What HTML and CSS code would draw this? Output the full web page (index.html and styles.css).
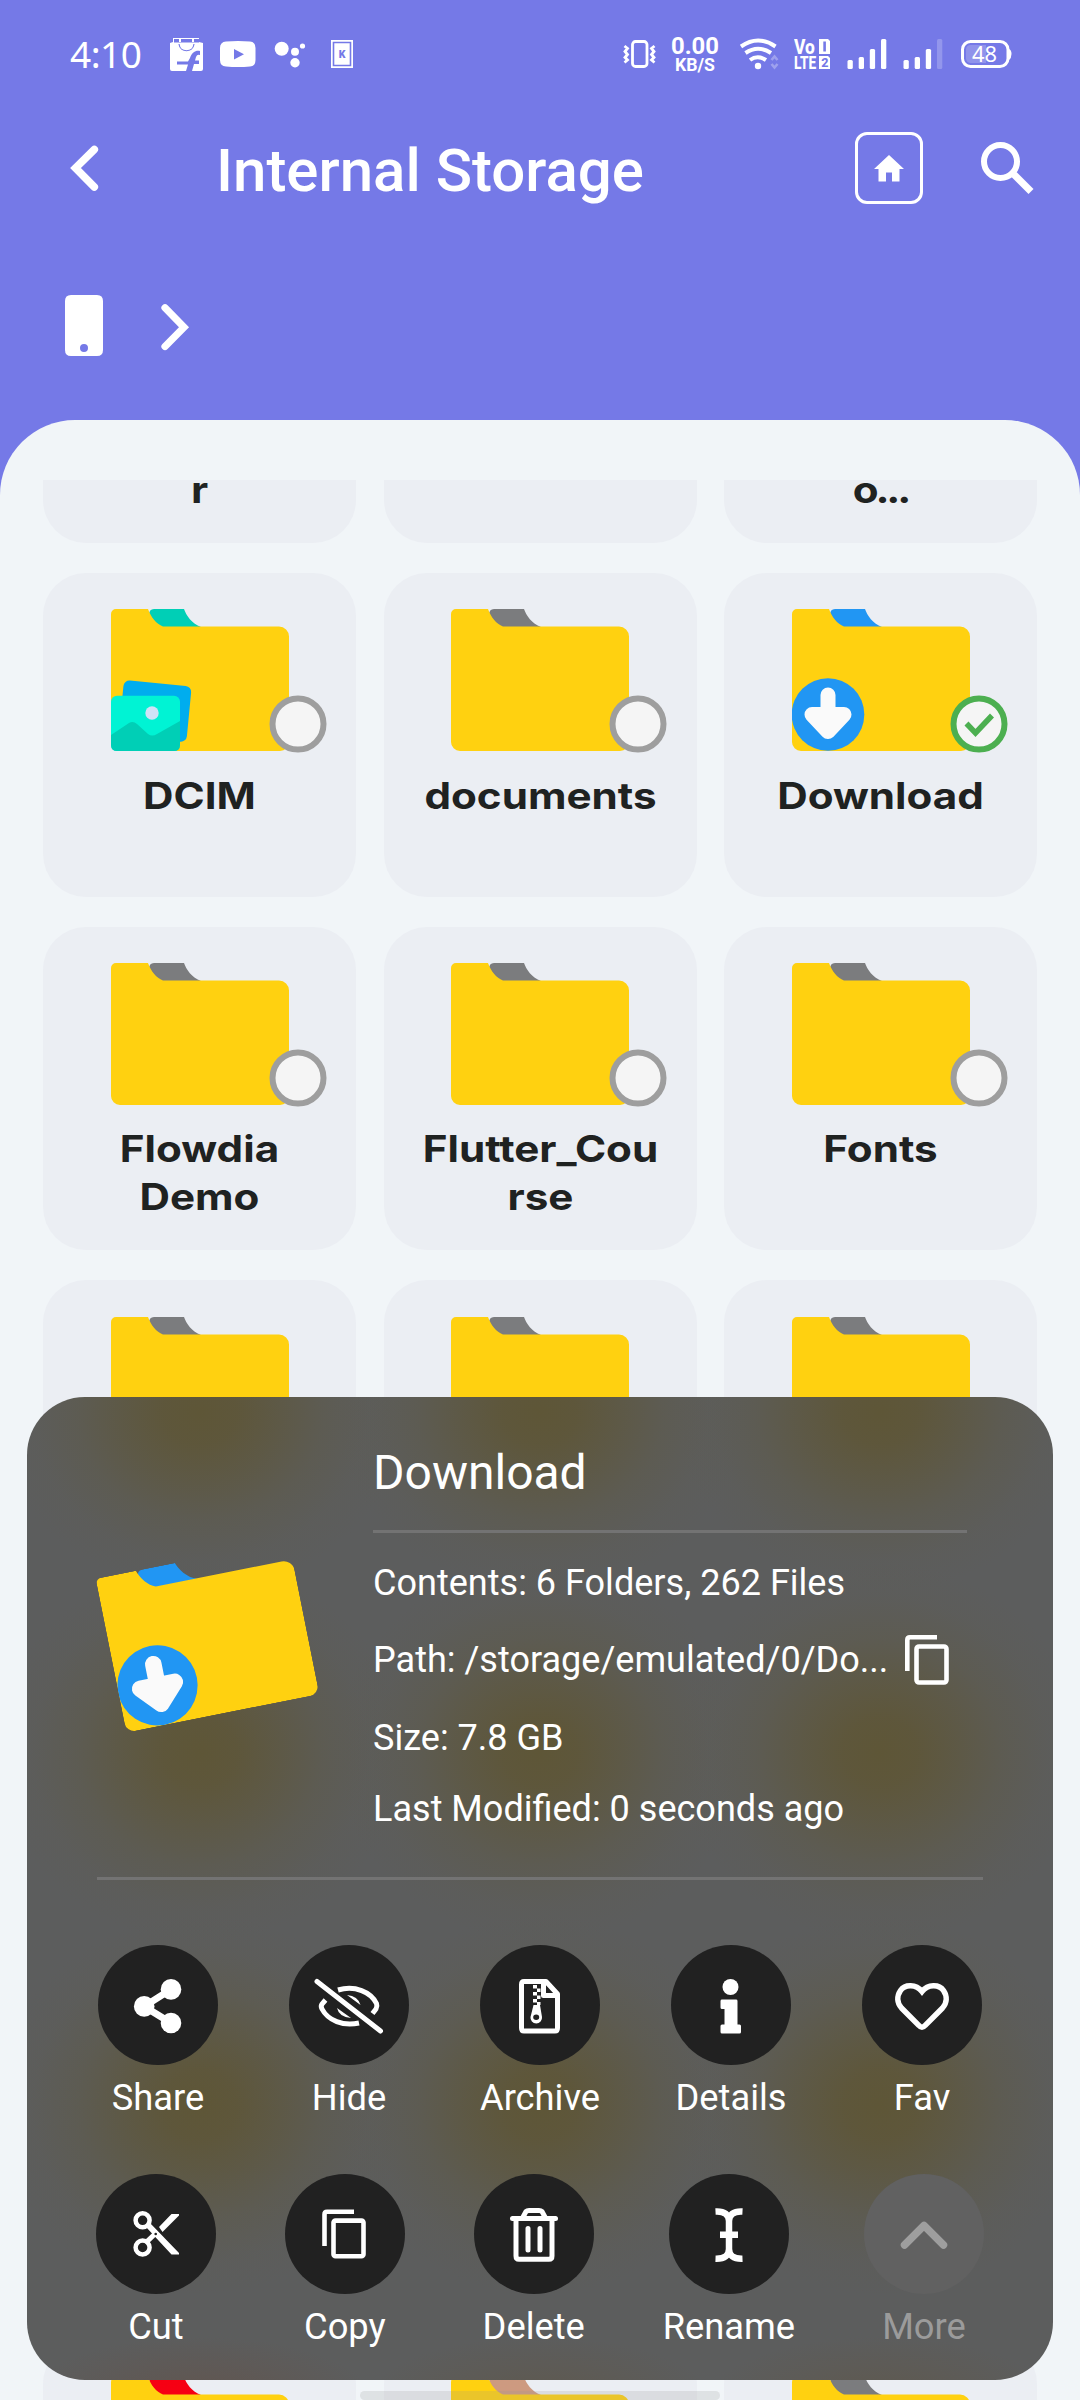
FILE: index.html
```html
<!DOCTYPE html>
<html lang="en">
<head>
<meta charset="utf-8">
<title>Internal Storage</title>
<link rel="stylesheet" href="styles.css">
</head>
<body>
<svg class="defs" width="0" height="0">
  <symbol id="folder" viewBox="0 0 178 142">
    <path d="M43 0H73C75 6 81 15 90 18H48L38 6Q38 0 43 0Z" fill="currentColor"/>
    <path d="M5 0H37C40 8 45 15 52 17.500H168A10 10 0 0 1 178 27.500V133A9 9 0 0 1 169 142H9A9 9 0 0 1 0 133V5A5 5 0 0 1 5 0Z" fill="#ffd110"/>
  </symbol>
  <symbol id="arrow-badge" viewBox="0 0 178 142">
    <circle cx="36" cy="105.500" r="36.300" fill="#2196f3"/>
    <path d="M36 86V118M20 105.500L36 122.500L52 105.500Z" fill="#fafafa" stroke="#fafafa" stroke-width="15" stroke-linecap="round" stroke-linejoin="round"/>
  </symbol>
  <symbol id="radio" viewBox="0 0 58 58">
    <circle cx="29" cy="29" r="25.500" fill="#f5f5f5" stroke="#9e9e9e" stroke-width="6"/>
  </symbol>
  <symbol id="radio-on" viewBox="0 0 58 58">
    <circle cx="29" cy="29" r="25.500" fill="#f5f5f5" stroke="#4caf50" stroke-width="6"/>
    <path d="M16.500 28.500L25.500 38L42 20.500" fill="none" stroke="#4caf50" stroke-width="5.500"/>
  </symbol>
</svg>

<div class="screen">
  <div class="status">
    <span class="time">4:10</span>
    <svg class="bag" width="34" height="40" viewBox="170 34 34 40">
      <path d="M173 38H199V42L203 43V69Q203 71 201 71H172Q170 71 170 69V43L173 42Z" fill="#fff"/>
      <path d="M174 39H199V42.500H174Z" fill="#7579e7"/><path d="M179 39h2v3h-2zM192 39h2v3h-2z" fill="#fff"/>
      <path d="M179 44C180 53 193 53 194 44" fill="none" stroke="#7579e7" stroke-width="1.200"/>
      <path d="M186 71L188 64.500H177V61.500H188L190 58C192 52 196 50 200 51V55Q197 54 196 57L195 60.500H199V64H194L192 71Z" fill="#7579e7"/>
    </svg>
    <svg class="yt" width="36" height="40" viewBox="220 34 36 40">
      <path d="M226 41.500Q238 40.500 250 41.500Q255.500 42 255.500 48V60Q255.500 66 250 66.500Q238 67.500 226 66.500Q220 66 220 60V48Q220 42 226 41.500Z" fill="#fff"/>
      <path d="M234 49V59.500L244 54.300Z" fill="#7579e7"/>
    </svg>
    <svg class="dots" width="32" height="40" viewBox="274 34 32 40" fill="#fff">
      <circle cx="281.700" cy="48.700" r="7"/><circle cx="295" cy="51.700" r="4"/><circle cx="302.500" cy="46" r="2.600"/><circle cx="295" cy="62.800" r="4.700"/>
    </svg>
    <svg class="kine" width="22" height="40" viewBox="331 34 22 40">
      <path d="M331 40H353V68H331Z" fill="#fff"/><path d="M333.500 42.500H350.500V65.500H333.500Z" fill="none" stroke="#7579e7" stroke-width="1.600"/>
      <text x="342" y="57.500" text-anchor="middle" font-family="Roboto, sans-serif" font-weight="900" font-size="10.500" fill="#7579e7">K</text>
    </svg>
    <div class="status-right">
      <svg width="33" height="40" viewBox="623 34 33 40" fill="none" stroke="#fff" stroke-width="2.800">
        <rect x="632.500" y="41.500" width="14.500" height="25" rx="3"/>
        <path d="M624.500 46L627.500 48.500L625 51.500L627.500 54.500L625 57.500L627.500 60L624.500 62.500M654.500 46L651.500 48.500L654 51.500L651.500 54.500L654 57.500L651.500 60L654.500 62.500"/>
      </svg>
      <svg class="speed" width="49" height="40" viewBox="671 34 49 40" fill="#fff" font-family="Roboto, sans-serif" font-weight="700">
        <text x="671" y="54" font-size="24.500" textLength="48" lengthAdjust="spacingAndGlyphs">0.00</text>
        <text x="675" y="71" font-size="18" textLength="40" lengthAdjust="spacingAndGlyphs">KB/S</text>
      </svg>
      <svg class="wifi" width="40" height="40" viewBox="739 34 40 40" fill="none" stroke="#fff" stroke-width="4">
        <path d="M741 46.500Q758 34.500 775.500 46.500M745.500 53Q758 44.500 771 53M750 60Q757.500 54.500 766 60"/>
        <circle cx="758" cy="66" r="3.200" fill="#fff" stroke="none"/>
        <path d="M771.500 60L774.500 56.500L777.500 60M771.500 64L774.500 67.500L777.500 64" stroke-width="2.600" opacity=".3"/>
      </svg>
      <svg class="volte" width="37" height="40" viewBox="794 34 37 40" fill="#fff" font-family="Roboto, sans-serif" font-weight="800">
        <text transform="translate(794 53.500) scale(.87 1)" font-size="20">Vo</text>
        <text transform="translate(794 69) scale(.72 1)" font-size="19">LTE</text>
        <path d="M819 39H828L830 41V54H819ZM819 56H828L830 58V69H819Z"/>
        <path d="M823.300 41.500h2.600v10h-2.600z" fill="#7579e7"/>
        <text x="821.200" y="67" font-size="12.500" fill="#7579e7">2</text>
      </svg>
      <svg class="sig" width="40" height="40" viewBox="847 34 40 40" fill="#fff">
        <rect x="847.500" y="60" width="5.300" height="9" rx="1.500"/><rect x="858.700" y="57" width="5.300" height="12" rx="1.500"/><rect x="869.800" y="49" width="5.300" height="20" rx="1.500"/><rect x="881" y="39" width="5.300" height="30" rx="1.500"/>
      </svg>
      <svg class="sig2" width="40" height="40" viewBox="847 34 40 40" fill="#fff">
        <rect x="847.500" y="60" width="5.300" height="9" rx="1.500"/><rect x="858.700" y="57" width="5.300" height="12" rx="1.500"/><rect x="869.800" y="49" width="5.300" height="20" rx="1.500"/><rect x="881" y="39" width="5.300" height="30" rx="1.500" opacity=".22"/>
      </svg>
      <svg class="batt" width="52" height="40" viewBox="960 34 52 40">
        <rect x="962.500" y="41.500" width="45.500" height="25" rx="8" fill="none" stroke="#fff" stroke-width="3"/>
        <path d="M1009 49Q1011.500 50 1011.500 54T1009 60Z" fill="#fff"/>
        <path d="M971 45H986V63H971Q966 63 966 58V50Q966 45 971 45Z" fill="#fff" opacity=".2"/>
        <text x="972" y="62" font-family="'Noto Sans', sans-serif" font-size="22" fill="#fff" textLength="25" lengthAdjust="spacingAndGlyphs">48</text>
      </svg>
    </div>
  </div>

  <div class="appbar">
    <svg class="back" width="30" height="48" viewBox="70 144 30 48" fill="none" stroke="#fff" stroke-width="7.600" stroke-linecap="round"><path d="M94.300 149.500L75.500 168L94.300 187"/></svg>
    <h1>Internal Storage</h1>
    <div class="home">
      <svg width="30" height="27" viewBox="0 0 30 27"><path d="M15 0L30 14H25.500V26.500H18V17.500H12V26.500H4.500V14H0Z" fill="#fff"/></svg>
    </div>
    <svg class="search" width="54" height="54" viewBox="980 140 54 54" fill="none" stroke="#fff">
      <circle cx="1000.500" cy="160.500" r="16.500" stroke-width="6"/><path d="M1014 173.500L1031 190.500" stroke-width="7"/><path d="M1011 171L1016 176" stroke-width="5"/>
    </svg>
  </div>

  <div class="crumbs">
    <svg width="38" height="62" viewBox="0 0 38 62"><path d="M6 0H32Q38 0 38 6V55Q38 61 32 61H6Q0 61 0 55V6Q0 0 6 0ZM19 49A4 4 0 1 0 19 57A4 4 0 1 0 19 49Z" fill="#fff" fill-rule="evenodd"/></svg>
    <svg class="next" width="30" height="48" viewBox="160 303 30 48" fill="none" stroke="#fff" stroke-width="7.200" stroke-linecap="round"><path d="M165 307.800L184 327.200L165 346.500"/></svg>
  </div>

  <main class="panel">
    <div class="grid">
      <div class="card cut"><p>r</p></div>
      <div class="card cut"></div>
      <div class="card cut"><p class="clipped">o...</p></div>

      <div class="card"><div class="thumb teal"><svg class="folder"><use href="#folder"/></svg>
        <svg class="over" viewBox="0 0 178 142">
          <rect x="13" y="71" width="68" height="56" rx="6" fill="#00adee" transform="rotate(5.500 13 71)"/>
          <rect y="86.700" width="69" height="55.300" rx="6" fill="#00f3d4"/>
          <path d="M0 126L18 114Q22 111.500 26 115L37 125Q41 128 46 125L69 112V136Q69 142 63 142H6Q0 142 0 136Z" fill="#00cfb6"/>
          <circle cx="41" cy="104" r="6.700" fill="#cfe2f7"/>
        </svg>
        <svg class="radio"><use href="#radio"/></svg></div><p>DCIM</p></div>
      <div class="card"><div class="thumb"><svg class="folder"><use href="#folder"/></svg><svg class="radio"><use href="#radio"/></svg></div><p>documents</p></div>
      <div class="card"><div class="thumb blue"><svg class="folder"><use href="#folder"/></svg><svg class="over"><use href="#arrow-badge"/></svg><svg class="radio"><use href="#radio-on"/></svg></div><p>Download</p></div>

      <div class="card"><div class="thumb"><svg class="folder"><use href="#folder"/></svg><svg class="radio"><use href="#radio"/></svg></div><p>Flowdia<br>Demo</p></div>
      <div class="card"><div class="thumb"><svg class="folder"><use href="#folder"/></svg><svg class="radio"><use href="#radio"/></svg></div><p>Flutter_Cou<br>rse</p></div>
      <div class="card"><div class="thumb"><svg class="folder"><use href="#folder"/></svg><svg class="radio"><use href="#radio"/></svg></div><p>Fonts</p></div>

      <div class="card"><div class="thumb"><svg class="folder"><use href="#folder"/></svg></div></div>
      <div class="card"><div class="thumb"><svg class="folder"><use href="#folder"/></svg></div></div>
      <div class="card"><div class="thumb"><svg class="folder"><use href="#folder"/></svg></div></div>

      <div class="card"></div><div class="card"></div><div class="card"></div>
      <div class="card"></div><div class="card"></div><div class="card"></div>

      <div class="card"><div class="thumb red"><svg class="folder"><use href="#folder"/></svg></div></div>
      <div class="card"><div class="thumb tan"><svg class="folder"><use href="#folder"/></svg></div></div>
      <div class="card"><div class="thumb"><svg class="folder"><use href="#folder"/></svg></div></div>
    </div>
  </main>

  <section class="sheet">
    <div class="info">
      <div class="preview blue"><svg viewBox="0 0 178 142"><use href="#folder"/><use href="#arrow-badge"/></svg></div>
      <div class="facts">
        <h2>Download</h2>
        <hr>
        <p>Contents: 6 Folders, 262 Files</p>
        <div class="path"><p>Path: /storage/emulated/0/Do...</p>
          <svg width="44" height="50" viewBox="0 0 44 50" fill="none" stroke="#fff" stroke-width="4.600"><path d="M2.300 36V5Q2.300 2.300 5 2.300H32"/><rect x="11.500" y="11.500" width="30" height="36" rx="2.500"/></svg>
        </div>
        <p class="size">Size: 7.8 GB</p>
        <p class="modified">Last Modified: 0 seconds ago</p>
      </div>
    </div>
    <hr>
    <div class="actions first">
      <div class="action"><svg viewBox="-60 -60 120 120"><g fill="#fff"><circle cx="-13.800" cy="1.400" r="10.300"/><circle cx="13" cy="-15.600" r="10.300"/><circle cx="13" cy="18" r="10.300"/></g><path d="M13 -15.600L-13.800 1.400L13 18" fill="none" stroke="#fff" stroke-width="7"/></svg><span>Share</span></div>
      <div class="action"><svg viewBox="-60 -60 120 120" fill="none" stroke="#fff" stroke-width="5">
        <path d="M-11 -15C6 -20 22 -13 27.500 -1.500Q28.500 1 27 4L23.500 8.500M-23.500 -5L-27 -1Q-28.500 1 -27 4C-21 15.500 -6 21.500 10 18"/>
        <path d="M-2 -10Q9 -9 11.500 0ZM-12 3Q-10 12 2 13Z" fill="#fff" stroke="none"/>
        <path d="M-32 -23.500L31.500 26" stroke-linecap="round"/></svg><span>Hide</span></div>
      <div class="action"><svg viewBox="-60 -60 120 120" fill="none" stroke="#fff" stroke-width="5">
        <path d="M-18.500 -20.500Q-18.500 -23.500 -16 -23.500H6L17.500 -11V23Q17.500 26 15 26H-16Q-18.500 26 -18.500 23ZM3.500 -23.500V-9.500H17.500" stroke-linejoin="round"/>
        <path d="M-7 -20h4v3.500h-4zM-3 -16.500h3.500v3.500h-3.500zM-7 -13h4v3.500h-4zM-3 -9.500h3.500v3.500h-3.500zM-7 -6h4v3.500h-4zM-3 -3h3.500v3h-3.500z" fill="#fff" stroke="none"/>
        <path d="M-6.500 0H0L2 12A5.800 5.800 0 1 1 -9.500 12ZM-6.800 12.300A3 2.700 0 1 0 -.8 12.300A3 2.700 0 1 0 -6.800 12.300Z" fill="#fff" fill-rule="evenodd" stroke="none"/></svg><span>Archive</span></div>
      <div class="action"><svg viewBox="-60 -60 120 120" fill="#fff"><circle cx="-.5" cy="-18" r="8"/><path d="M-9 -5.400H5Q6.500 -5.400 6.500 -4V19.500H8.500Q10 19.500 10 21V27Q10 28.500 8.500 28.500H-9Q-10.500 28.500 -10.500 27V21Q-10.500 19.500 -9 19.500H-6.500V4H-9Q-10.500 4 -10.500 2.500V-4Q-10.500 -5.400 -9 -5.400Z"/></svg><span>Details</span></div>
      <div class="action"><svg viewBox="-60 -60 120 120" fill="none" stroke="#fff" stroke-width="5.500"><path d="M0 -13.500C-6 -21 -17 -21 -21.500 -14.500C-25.500 -8.500 -25 -2 -20.500 3L-3 20.500Q0 24 3 20.500L20.500 3C25 -2 25.500 -8.500 21.500 -14.500C17 -21 6 -21 0 -13.500Z"/></svg><span>Fav</span></div>
    </div>
    <div class="actions second">
      <div class="action"><svg viewBox="-60 -60 120 120" fill="none" stroke="#fff"><g stroke-width="4.500"><circle cx="-13.400" cy="-13.700" r="7"/><circle cx="-13.400" cy="13.500" r="7"/></g><path d="M-9 7.500L0 -1" stroke-width="5"/><path d="M-10 -10L-6 -11L23 19V20.500H15.500L-10 -7ZM3 -7L15.500 -20H23V-18.500L6.500 -2Z" fill="#fff" stroke="none"/><circle cx="-.3" cy="0" r="1.300" fill="#212121" stroke="none"/></svg><span>Cut</span></div>
      <div class="action"><svg viewBox="-60 -60 120 120" fill="none" stroke="#fff" stroke-width="4.600"><path d="M-20.500 12V-19.500Q-20.500 -22.300 -18 -22.300H9"/><rect x="-11.500" y="-13.400" width="30" height="35.700" rx="2"/></svg><span>Copy</span></div>
      <div class="action"><svg viewBox="-60 -60 120 120" fill="none" stroke="#fff" stroke-width="5"><path d="M-21.500 -15.500H21.500" stroke-linecap="round"/><path d="M-11.500 -16L-8 -22.500Q-7 -23.500 -5 -23.500H5Q7 -23.500 8 -22.500L11.500 -16M-18 -15V22Q-18 25.300 -15 25.300H15Q18 25.300 18 22V-15"/><path d="M-6 -5.500V16M6 -5.500V16" stroke-linecap="round"/></svg><span>Delete</span></div>
      <div class="action"><svg viewBox="-60 -60 120 120" fill="none" stroke="#fff" stroke-width="6.500"><path d="M-13.500 -22.500C-4 -23 0 -19 0 -13V15C0 21 -4 25 -13.500 24.700M13.500 -22.500C4 -23 0 -19 0 -13M0 15C0 21 4 25 13.500 24.700M-9 .8H9"/></svg><span>Rename</span></div>
      <div class="action more"><svg viewBox="-60 -60 120 120" fill="none" stroke="#9e9e9e" stroke-width="7.500" stroke-linecap="round" stroke-linejoin="round"><path d="M-19.500 11L0 -8.500L19.500 11"/></svg><span>More</span></div>
    </div>
  </section>
  <div class="pill"></div>
</div>
</body>
</html>
```
FILE: styles.css
```css
* { box-sizing: border-box; }
body { margin: 0; }
h1, h2, p { margin: 0; font-weight: 400; }
svg { display: block; flex: none; }
hr { margin: 0; border: 0; height: 3px; background: #737373; }
.defs { position: absolute; }

.screen {
  position: relative;
  width: 1080px;
  height: 2400px;
  overflow: hidden;
  background: #7579e7;
  color: #fff;
  font-family: Roboto, sans-serif;
}

.status {
  display: flex;
  align-items: flex-start;
  height: 132px;
  padding: 34px 68px 0 70px;
}
.time {
  width: 100px;
  font: 37px/40px "Noto Sans", sans-serif;
  letter-spacing: -.5px;
}
.yt { margin-left: 16px; }
.dots { margin-left: 18px; }
.kine { margin-left: 25px; }
.status-right { display: flex; margin-left: auto; }
.speed { margin-left: 15px; }
.wifi { margin-left: 19px; }
.volte { margin-left: 15px; }
.sig { margin-left: 16px; }
.sig2 { margin-left: 16px; }
.batt { margin-left: 17px; }

.appbar {
  display: flex;
  align-items: center;
  height: 72px;
  padding: 0 46px 0 70px;
}
h1 {
  margin: 5px auto 0 116px;
  font-size: 60px;
  font-weight: 500;
  line-height: 72px;
  white-space: nowrap;
}
.home {
  display: flex;
  align-items: center;
  justify-content: center;
  width: 68px;
  height: 72px;
  border: 3px solid #fff;
  border-radius: 12px;
}
.search { margin-left: 57px; }

.crumbs {
  display: flex;
  align-items: center;
  gap: 57px;
  height: 216px;
  padding: 28px 0 0 65px;
}
.crumbs .next { margin-top: 2px; }

.panel {
  height: 1980px;
  padding-top: 60px;
  border-radius: 75px 75px 0 0;
  background: #f1f5f8;
}
.grid {
  display: grid;
  grid-template-columns: repeat(3, 313px);
  grid-template-rows: 63.200px;
  grid-auto-rows: 323.800px;
  gap: 29.800px 27.500px;
  justify-content: center;
  height: 1920px;
  overflow: hidden;
}
.card {
  padding-top: 36.400px;
  border-radius: 43px;
  background: #ebeef3;
  color: #1f2221;
}
.card.cut {
  padding-top: 0;
  border-radius: 0 0 43px 43px;
}
/* Widened Inter, close to a geometric display face */
.card p {
  margin-top: 20.500px;
  font: 700 37px/48px Inter, sans-serif;
  text-align: center;
  transform: scaleX(1.14);
}
.card.cut p { margin-top: -14px; }
.card.cut .clipped { letter-spacing: -2.800px; }
.thumb {
  position: relative;
  width: 178px;
  height: 142px;
  margin: 0 auto;
  color: #7b7c7e;
}
.folder { width: 178px; height: 142px; }
.over { position: absolute; inset: 0; width: 178px; height: 142px; }
.radio { position: absolute; left: 158px; top: 86px; width: 58px; height: 58px; }
.teal { color: #00cfb6; }
.blue { color: #2196f3; }
.red { color: #f60013; }
.tan { color: #cd9a80; }

/* Frosted sheet: soft amber glows where folders lie beneath */
.sheet {
  --glow: rgba(94, 86, 55, 1) 0%, rgba(94, 86, 56, .92) 18%, rgba(94, 87, 60, .7) 38%, rgba(94, 89, 68, .42) 60%, rgba(94, 91, 78, .17) 82%, rgba(93, 94, 94, 0) 100%;
  position: absolute;
  left: 27px;
  top: 1397px;
  width: 1026px;
  height: 983px;
  padding: 47px 70px 0;
  border-radius: 58px;
  background:
    radial-gradient(170px 60px at 173px 1000px, rgba(100, 80, 70, .6), rgba(94, 90, 84, 0)),
    radial-gradient(170px 60px at 513px 1000px, rgba(96, 86, 70, .6), rgba(94, 90, 84, 0)),
    radial-gradient(170px 60px at 853px 1000px, rgba(96, 86, 70, .6), rgba(94, 90, 84, 0)),
    radial-gradient(205px 180px at 173px 15px, var(--glow)),
    radial-gradient(205px 180px at 513px 15px, var(--glow)),
    radial-gradient(205px 180px at 853px 15px, var(--glow)),
    radial-gradient(205px 190px at 173px 355px, var(--glow)),
    radial-gradient(205px 190px at 513px 355px, var(--glow)),
    radial-gradient(205px 190px at 853px 355px, var(--glow)),
    radial-gradient(205px 190px at 173px 708px, var(--glow)),
    radial-gradient(205px 190px at 513px 708px, var(--glow)),
    radial-gradient(205px 190px at 853px 708px, var(--glow)),
    #5c5d5d;
}
.info {
  display: flex;
  align-items: center;
  height: 433px;
  padding-bottom: 48px;
}
.preview {
  width: 197px;
  margin-left: 12px;
  transform: rotate(-11.300deg);
}
.preview svg { width: 197px; height: 157px; }
.facts { width: 594px; margin-left: 67px; }
h2 { margin-bottom: 29px; padding-top: 1px; font-size: 48px; line-height: 56px; }
.facts p { font-size: 36.050px; line-height: 42px; white-space: nowrap; }
.facts hr + p { margin-top: 29px; }
.path { display: flex; align-items: center; justify-content: space-between; height: 50px; margin-top: 31px; padding-right: 18px; }
.facts .size { margin-top: 32px; }
.facts .modified { margin-top: 29px; }

.actions { display: flex; justify-content: space-between; }
.first { margin: 65px 1px 0; }
.second { margin: 55px -1px 0; }
.action {
  display: flex;
  flex-direction: column;
  align-items: center;
  min-width: 120px;
  font-size: 36.300px;
  line-height: 42px;
}
.action svg {
  width: 120px;
  height: 120px;
  margin-bottom: 12px;
  border-radius: 50%;
  background: #212121;
}
.action span { white-space: nowrap; }
.more { color: #9b9b9b; }
.more svg { background: #616161; }

.pill {
  position: absolute;
  left: 360px;
  top: 2391px;
  width: 360px;
  height: 9px;
  border-radius: 5px;
  background: rgba(150, 150, 150, .2);
}
```
